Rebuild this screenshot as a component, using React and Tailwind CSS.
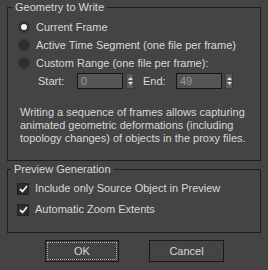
import React from 'react';

function Radio({ checked, label }) {
  return (
    <label className="flex h-[18px] items-center gap-[6px] whitespace-nowrap">
      <span className="flex h-[12px] w-[12px] items-center justify-center rounded-full border border-[#3a3a3a] bg-[#2e2e2e]">
        {checked && <span className="h-[6px] w-[6px] rounded-full bg-[#f2f2f2]" />}
      </span>
      <span>{label}</span>
    </label>
  );
}

function Check({ label }) {
  return (
    <label className="flex h-[21px] items-center gap-[6px] whitespace-nowrap">
      <span className="flex h-[12px] w-[12px] items-center justify-center border border-[#222] bg-[#2c2c2c]">
        <svg width="9" height="8" viewBox="0 0 9 8">
          <path d="M1 4 L3.5 6.5 L8 1" fill="none" stroke="#f0f0f0" strokeWidth="1.8" />
        </svg>
      </span>
      <span>{label}</span>
    </label>
  );
}

function Spinner({ value }) {
  return (
    <div className="flex items-center gap-[3px]">
      <div className="flex h-[16px] w-[46px] items-center border border-[#151515] bg-[#555] pl-[3px] text-[#9a9a9a]">
        {value}
      </div>
      <div className="flex h-[16px] w-[8px] flex-col items-center justify-center gap-[2px] border border-[#3a3a3a] bg-[#5a5a5a]">
        <svg width="5" height="3" viewBox="0 0 5 3"><path d="M0 3 L2.5 0 L5 3 Z" fill="#e0e0e0" /></svg>
        <svg width="5" height="3" viewBox="0 0 5 3"><path d="M0 0 L2.5 3 L5 0 Z" fill="#e0e0e0" /></svg>
      </div>
    </div>
  );
}

export default function App() {
  return (
    <div
      className="h-[270px] w-[268px] bg-[#444444] px-[7px] pt-[1px] text-[11px] leading-[13px] text-[#d8d8d8]"
      style={{ fontFamily: '"Liberation Sans", Arial, sans-serif' }}
    >
      <fieldset className="h-[160px] border border-[#1e1e1e]">
        <legend className="ml-[4px] px-[3px]">Geometry to Write</legend>
        <div className="mt-[4px] flex flex-col pl-[10px]">
          <Radio checked label="Current Frame" />
          <Radio label="Active Time Segment (one file per frame)" />
          <Radio label="Custom Range (one file per frame):" />
          <div className="flex h-[18px] items-center pl-[20px]">
            <span className="w-[39px]">Start:</span>
            <Spinner value="0" />
            <span className="ml-[9px] w-[33px]">End:</span>
            <Spinner value="49" />
          </div>
        </div>
        <p className="mt-[16px] pl-[12px] pr-[4px]">
          Writing a sequence of frames allows capturing animated geometric deformations (including topology changes) of objects in the proxy files.
        </p>
      </fieldset>
      <fieldset className="mt-[2px] h-[70px] border border-[#1e1e1e]">
        <legend className="ml-[3px] px-[3px]">Preview Generation</legend>
        <div className="mt-[2px] flex flex-col pl-[9px]">
          <Check label="Include only Source Object in Preview" />
          <Check label="Automatic Zoom Extents" />
        </div>
      </fieldset>
      <div className="mt-[7px] flex gap-[30px] pl-[38px]">
        <button className="flex h-[22px] w-[74px] items-center justify-center border border-[#1a1a1a] bg-[#444] text-[#d8d8d8] outline-1 outline-dotted -outline-offset-[3px] outline-[#aaa]">
          OK
        </button>
        <button className="flex h-[22px] w-[75px] items-center justify-center border border-[#1a1a1a] bg-[#444] text-[#d8d8d8]">
          Cancel
        </button>
      </div>
    </div>
  );
}
